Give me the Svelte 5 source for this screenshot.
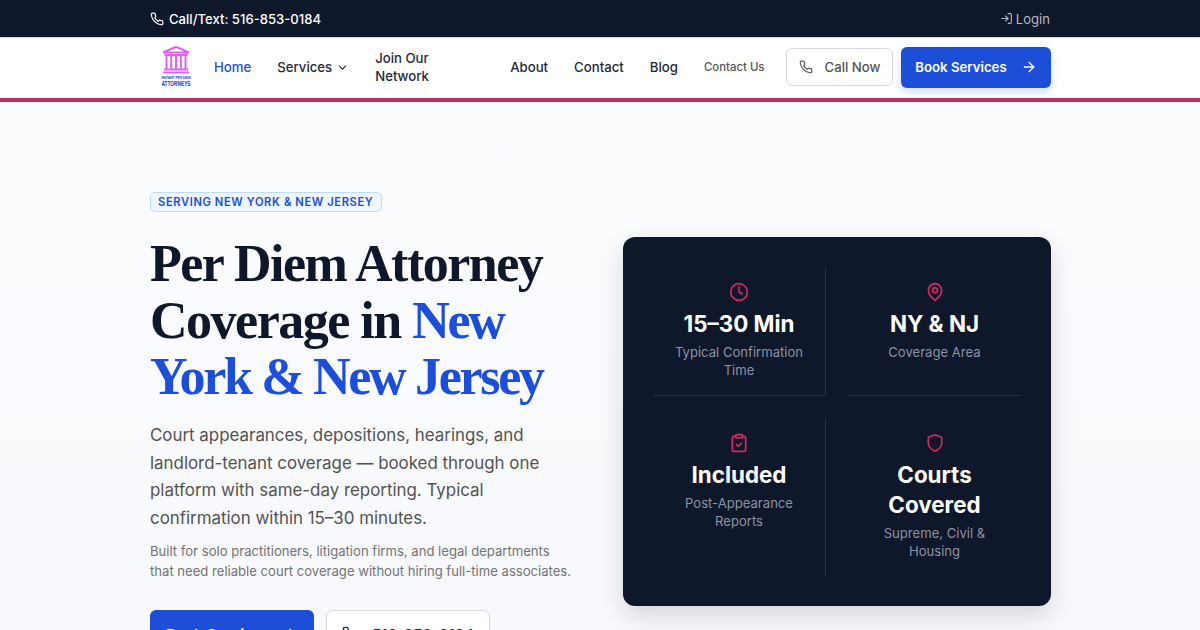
<script>
  const stats = [
    { icon: 'clock', value: '15–30 Min', label: 'Typical Confirmation Time' },
    { icon: 'pin', value: 'NY & NJ', label: 'Coverage Area' },
    { icon: 'clipboard', value: 'Included', label: 'Post-Appearance Reports' },
    { icon: 'shield', value: 'Courts Covered', label: 'Supreme, Civil & Housing' }
  ];
</script>

{#snippet phone(size)}
  <svg width={size} height={size} viewBox="0 0 24 24" fill="none" stroke="currentColor" stroke-width="2" stroke-linecap="round" stroke-linejoin="round">
    <path d="M22 16.92v3a2 2 0 0 1-2.18 2 19.79 19.79 0 0 1-8.63-3.07 19.5 19.5 0 0 1-6-6 19.79 19.79 0 0 1-3.07-8.67A2 2 0 0 1 4.11 2h3a2 2 0 0 1 2 1.72 12.84 12.84 0 0 0 .7 2.81 2 2 0 0 1-.45 2.11L8.09 9.91a16 16 0 0 0 6 6l1.27-1.27a2 2 0 0 1 2.11-.45 12.84 12.84 0 0 0 2.81.7A2 2 0 0 1 22 16.92z" />
  </svg>
{/snippet}

{#snippet arrow(size)}
  <svg width={size} height={size} viewBox="0 0 24 24" fill="none" stroke="currentColor" stroke-width="2" stroke-linecap="round" stroke-linejoin="round">
    <path d="M5 12h14" /><path d="m12 5 7 7-7 7" />
  </svg>
{/snippet}

<div class="topbar">
  <div class="container topbar-inner">
    <span class="call">{@render phone(14)} Call/Text: 516-853-0184</span>
    <span class="login">
      <svg width="13" height="13" viewBox="0 0 24 24" fill="none" stroke="currentColor" stroke-width="2" stroke-linecap="round" stroke-linejoin="round">
        <path d="M15 3h4a2 2 0 0 1 2 2v14a2 2 0 0 1-2 2h-4" /><path d="m10 17 5-5-5-5" /><path d="M15 12H3" />
      </svg>
      Login
    </span>
  </div>
</div>

<header class="header">
  <div class="container nav">
    <svg class="logo" width="32" height="46" viewBox="0 0 32 46">
      <g fill="none" stroke="#e060f8" stroke-width="2">
        <path d="M3 8.5 16 2.8l13 5.7z" />
        <path d="M4.5 11h23M4 25.5h24M3 28.5h26" />
        <path d="M6.5 11v14M11.2 11v14M16 11v14M20.8 11v14M25.5 11v14" />
      </g>
      <text class="logo-small" x="16" y="35" text-anchor="middle" textLength="29" lengthAdjust="spacingAndGlyphs">INSTANT PER DIEM</text>
      <text class="logo-big" x="16" y="42" text-anchor="middle" textLength="29" lengthAdjust="spacingAndGlyphs">ATTORNEYS</text>
    </svg>
    <nav class="links">
      <a class="active" href="#home">Home</a>
      <a href="#services" class="services">Services
        <svg width="13" height="13" viewBox="0 0 24 24" fill="none" stroke="currentColor" stroke-width="2" stroke-linecap="round" stroke-linejoin="round"><path d="m6 9 6 6 6-6" /></svg>
      </a>
      <a class="join" href="#join">Join Our Network</a>
      <a class="about" href="#about">About</a>
      <a href="#contact">Contact</a>
      <a href="#blog">Blog</a>
      <a class="small" href="#contact-us">Contact Us</a>
    </nav>
    <button class="btn-call">{@render phone(14)} <span>Call Now</span></button>
    <button class="btn-book">Book Services {@render arrow(16)}</button>
  </div>
</header>

<main class="hero">
  <div class="container hero-grid">
    <section class="copy">
      <span class="badge">SERVING NEW YORK &amp; NEW JERSEY</span>
      <h1>Per Diem Attorney Coverage in <em>New York &amp; New Jersey</em></h1>
      <p class="lead">Court appearances, depositions, hearings, and landlord-tenant coverage — booked through one platform with same-day reporting. Typical confirmation within 15–30 minutes.</p>
      <p class="sub">Built for solo practitioners, litigation firms, and legal departments that need reliable court coverage without hiring full-time associates.</p>
      <div class="actions">
        <button class="cta-book">Book Services {@render arrow(16)}</button>
        <button class="cta-call">{@render phone(16)} <span>516-853-0184</span></button>
      </div>
    </section>

    <aside class="panel">
      {#each stats as stat, i}
        <div class="stat" class:right={i % 2 === 1} class:bottom={i > 1}>
          <svg class="stat-icon" width="20" height="20" viewBox="0 0 24 24" fill="none" stroke="currentColor" stroke-width="2" stroke-linecap="round" stroke-linejoin="round">
            {#if stat.icon === 'clock'}
              <circle cx="12" cy="12" r="10" /><path d="M12 6v6l4 2" />
            {:else if stat.icon === 'pin'}
              <path d="M20 10c0 6-8 12-8 12s-8-6-8-12a8 8 0 0 1 16 0Z" /><circle cx="12" cy="10" r="3" />
            {:else if stat.icon === 'clipboard'}
              <rect x="8" y="2" width="8" height="4" rx="1" /><path d="M16 4h2a2 2 0 0 1 2 2v14a2 2 0 0 1-2 2H6a2 2 0 0 1-2-2V6a2 2 0 0 1 2-2h2" /><path d="m9 14 2 2 4-4" />
            {:else}
              <path d="M12 22s8-4 8-10V5l-8-3-8 3v7c0 6 8 10 8 10z" />
            {/if}
          </svg>
          <div class="value">{stat.value}</div>
          <div class="label">{stat.label}</div>
        </div>
      {/each}
    </aside>
  </div>
</main>

<style>
  :global(body) {
    overflow: hidden;
    font-family: Inter, "Liberation Sans", sans-serif;
  }

  .container {
    width: 901px;
    margin-left: 150px;
  }

  .topbar {
    background: #0f172a;
    height: 37px;
    color: #fff;
    font-size: 13.1px;
  }

  .topbar-inner {
    height: 100%;
    display: flex;
    align-items: center;
    justify-content: space-between;
  }

  .call {
    display: flex;
    align-items: center;
    gap: 5px;
    font-weight: 500;
  }

  .login {
    display: flex;
    align-items: center;
    gap: 3px;
    color: #b4bac4;
    margin-right: 1px;
  }

  .header {
    box-sizing: border-box;
    background: #fff;
    height: 65px;
    padding-bottom: 2px;
    border-top: 1px solid #d8d8e2;
    border-bottom: 4px solid #be2e5e;
  }

  .nav {
    height: 100%;
    display: flex;
    align-items: center;
  }

  .logo {
    flex: none;
    overflow: visible;
    margin-left: 10px;
    margin-right: 22px;
  }

  .logo-small {
    font: 700 4.4px "Liberation Sans", sans-serif;
    fill: #2433c4;
  }

  .logo-big {
    font: 700 7px "Liberation Sans", sans-serif;
    fill: #2433c4;
  }

  .links {
    flex: 1;
    display: flex;
    align-items: center;
    font-size: 13.2px;
    font-weight: 500;
  }

  .links a {
    color: #1e293b;
    text-decoration: none;
    margin-right: 26px;
    line-height: 18.5px;
    white-space: nowrap;
  }

  .links a.active {
    color: #1d4ed8;
  }

  .services {
    display: flex;
    align-items: center;
    gap: 4px;
  }

  .links .join {
    width: 55px;
    white-space: normal;
    margin-right: 0;
  }

  .links .about {
    margin-left: 80px;
  }

  .links .small {
    font-size: 11.4px;
    color: #555;
    margin-right: 0;
  }

  button {
    font-family: inherit;
    cursor: pointer;
  }

  .btn-call {
    flex: none;
    width: 107px;
    height: 38px;
    display: flex;
    align-items: center;
    justify-content: center;
    gap: 12px;
    background: #fff;
    border: 1px solid #d8d8e2;
    border-radius: 6px;
    color: #555;
    font-size: 13.2px;
    font-weight: 500;
    margin-right: 8px;
  }

  .btn-book {
    flex: none;
    width: 150px;
    height: 41px;
    display: flex;
    align-items: center;
    justify-content: center;
    gap: 14px;
    background: #1d4ed8;
    border: 0;
    border-radius: 6px;
    color: #fff;
    font-size: 13.2px;
    font-weight: 600;
    box-shadow: 0 4px 8px rgba(29, 78, 216, 0.2);
  }

  .hero {
    height: 528px;
    background: linear-gradient(180deg, #fbfcfe, #f8f9fc);
  }

  .hero-grid {
    display: grid;
    grid-template-columns: 1fr 428px;
    gap: 48px;
  }

  .copy {
    padding-top: 90px;
  }

  .badge {
    display: block;
    width: fit-content;
    padding: 3px 8px 3px 7px;
    border: 1px solid #bfdbfe;
    border-radius: 5px;
    background: #eff6ff;
    color: #1d4ed8;
    font-size: 11.2px;
    font-weight: 600;
    letter-spacing: 0.6px;
    line-height: 12px;
  }

  h1 {
    margin: 24px 0 0;
    font-family: "Liberation Serif", serif;
    font-size: 52px;
    font-weight: 700;
    line-height: 56.7px;
    letter-spacing: -1.5px;
    color: #0f172a;
  }

  h1 em {
    font-style: normal;
    letter-spacing: -2.3px;
    color: #1d4ed8;
  }

  .lead {
    margin: 16px 0 0;
    font-size: 16.9px;
    line-height: 27.5px;
    color: #525252;
  }

  .sub {
    margin: 9px 0 0;
    font-size: 13.1px;
    line-height: 20px;
    color: #737373;
  }

  .actions {
    display: flex;
    gap: 12px;
    margin-top: 29px;
  }

  .cta-book,
  .cta-call {
    height: 48px;
    display: flex;
    align-items: center;
    justify-content: center;
    border-radius: 6px;
    font-size: 15px;
    font-weight: 600;
  }

  .cta-book {
    width: 164px;
    gap: 12px;
    background: #1d4ed8;
    border: 0;
    color: #fff;
  }

  .cta-call {
    width: 164px;
    gap: 14px;
    background: #fff;
    border: 1px solid #d8d8e2;
    color: #1e293b;
    font-weight: 500;
  }

  .panel {
    align-self: start;
    margin-top: 135px;
    height: 369px;
    box-sizing: border-box;
    padding: 30px;
    background: #0f172a;
    border-radius: 12px;
    box-shadow: 0 10px 25px rgba(15, 23, 42, 0.15);
    display: grid;
    grid-template-columns: 173px 173px;
    grid-template-rows: 129px 158px;
    gap: 22px;
  }

  .stat {
    display: flex;
    flex-direction: column;
    align-items: center;
    text-align: center;
    padding: 15px 15px 0;
    border-right: 1px solid #263144;
    border-bottom: 1px solid #263144;
  }

  .stat.right {
    border-right: 0;
  }

  .stat.bottom {
    border-bottom: 0;
  }

  .stat-icon {
    flex: none;
    color: #d42a62;
  }

  .value {
    margin-top: 7px;
    color: #fff;
    font-size: 22.4px;
    font-weight: 700;
    line-height: 30px;
  }

  .label {
    margin-top: 3.5px;
    color: #8993a4;
    font-size: 13.1px;
    line-height: 18.5px;
  }
</style>
